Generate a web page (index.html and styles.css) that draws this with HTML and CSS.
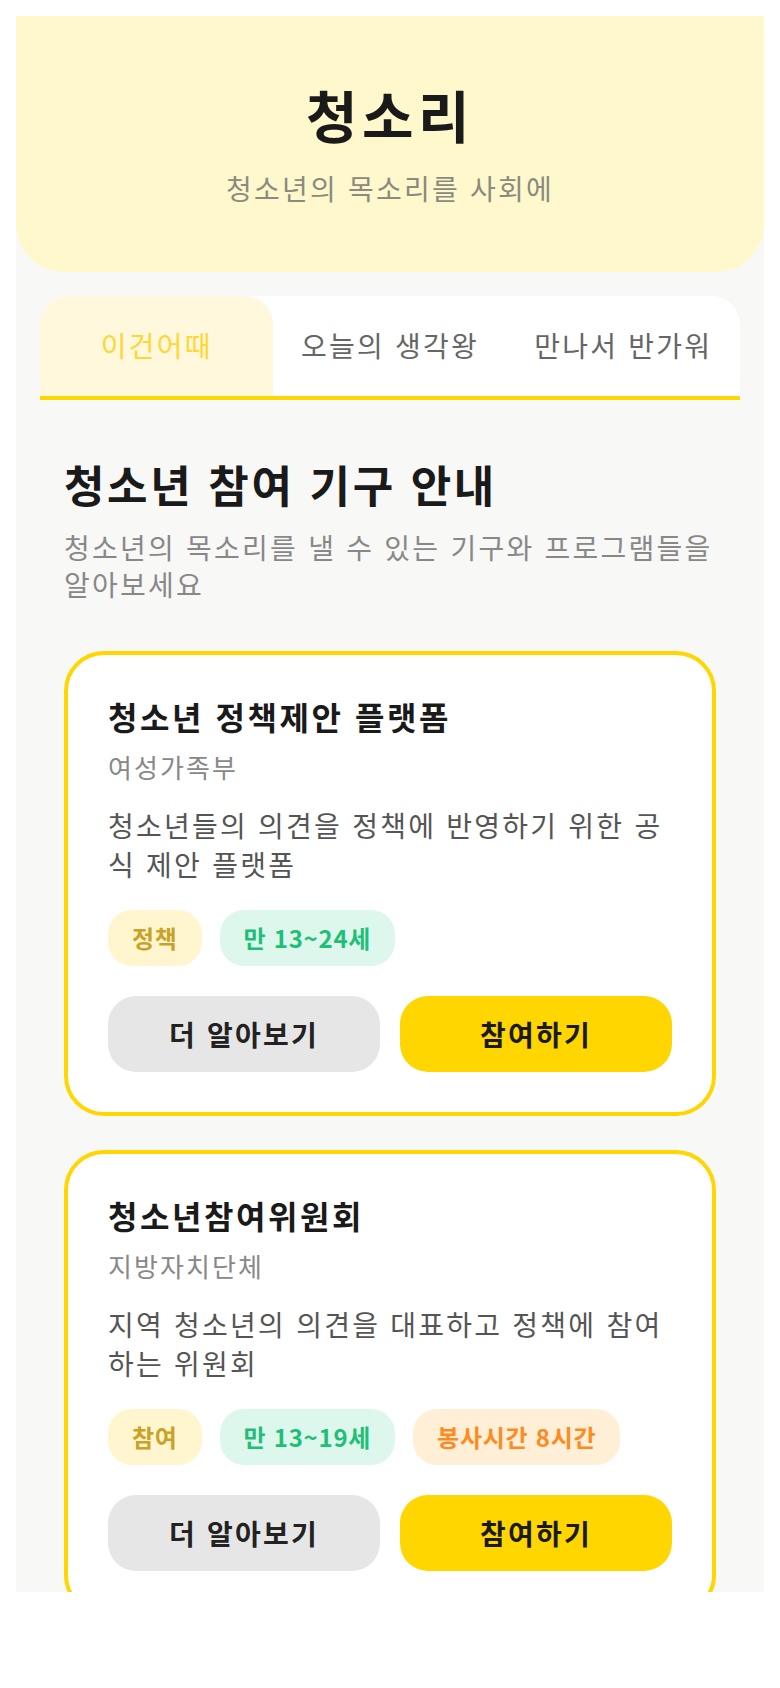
FILE: index.html
```html
<!DOCTYPE html>
<html lang="ko">
<head>
<meta charset="utf-8">
<title>청소리</title>
<link rel="stylesheet" href="styles.css">
</head>
<body>
<div class="app">
    <header class="app-header">
        <h1 class="app-title">청소리</h1>
        <p class="app-subtitle">청소년의 목소리를 사회에</p>
    </header>

    <nav class="tab-bar">
        <div class="tab tab-active">이건어때</div>
        <div class="tab">오늘의 생각왕</div>
        <div class="tab">만나서 반가워</div>
    </nav>

    <section class="content">
        <h2 class="section-title">청소년 참여 기구 안내</h2>
        <p class="section-desc">청소년의 목소리를 낼 수 있는 기구와 프로그램들을 알아보세요</p>

        <div class="org-card">
            <h3 class="org-name">청소년 정책제안 플랫폼</h3>
            <p class="org-owner">여성가족부</p>
            <p class="org-desc">청소년들의 의견을 정책에 반영하기 위한 공식 제안 플랫폼</p>
            <div class="tag-list">
                <span class="tag tag-topic">정책</span>
                <span class="tag tag-age">만 13~24세</span>
            </div>
            <div class="card-actions">
                <button class="btn btn-more">더 알아보기</button>
                <button class="btn btn-join">참여하기</button>
            </div>
        </div>

        <div class="org-card">
            <h3 class="org-name">청소년참여위원회</h3>
            <p class="org-owner">지방자치단체</p>
            <p class="org-desc">지역 청소년의 의견을 대표하고 정책에 참여하는 위원회</p>
            <div class="tag-list">
                <span class="tag tag-topic">참여</span>
                <span class="tag tag-age">만 13~19세</span>
                <span class="tag tag-hours">봉사시간 8시간</span>
            </div>
            <div class="card-actions">
                <button class="btn btn-more">더 알아보기</button>
                <button class="btn btn-join">참여하기</button>
            </div>
        </div>
    </section>
</div>
</body>
</html>
```

FILE: styles.css
```css
body {
    margin: 16px;
    background-color: #ffffff;
    font-family: "Noto Sans CJK KR", "Noto Sans", sans-serif;
    color: #1a1a1a;
}

.app-title,
.app-subtitle,
.tab,
.section-desc,
.org-name,
.org-owner,
.org-desc,
.btn {
    letter-spacing: 0.08em;
}

.app {
    height: 1576px;
    overflow: hidden;
    background-color: #f8f8f6;
}

.app-header {
    background-color: #fff8cc;
    border-radius: 0 0 48px 48px;
    padding: 64px 24px 64px;
    text-align: center;
}

.app-title {
    margin: 0;
    font-size: 56px;
    line-height: 67px;
    font-weight: 700;
    color: #1a1a1a;
}

.app-subtitle {
    margin: 22px 0 0;
    font-size: 28px;
    line-height: 39px;
    color: #8a8a80;
}

.tab-bar {
    display: flex;
    margin: 24px 24px 0;
    background-color: #ffffff;
    border-radius: 28px 28px 0 0;
    border-bottom: 4px solid #ffd600;
}

.tab {
    flex: 1;
    padding: 30px 0 31px;
    font-size: 28px;
    line-height: 39px;
    text-align: center;
    color: #666666;
    border-radius: 28px 28px 0 0;
}

.tab-active {
    background-color: #fff8dc;
    color: #ffd633;
}

.content {
    padding: 56px 48px 0;
}

.section-title {
    margin: 0;
    font-size: 44px;
    line-height: 57px;
    font-weight: 700;
    letter-spacing: 0.06em;
    color: #1a1a1a;
}

.section-desc {
    margin: 16px 0 0;
    font-size: 28px;
    line-height: 37px;
    color: #888888;
}

.org-card {
    margin-top: 48px;
    background-color: #ffffff;
    border: 4px solid #ffd600;
    border-radius: 40px;
    padding: 40px;
}

.org-card + .org-card {
    margin-top: 34px;
}

.org-name {
    margin: 0;
    font-size: 32px;
    line-height: 42px;
    font-weight: 700;
    color: #1a1a1a;
}

.org-owner {
    margin: 12px 0 0;
    font-size: 26px;
    line-height: 36px;
    color: #888888;
}

.org-desc {
    margin: 21px 0 0;
    font-size: 28px;
    line-height: 39px;
    color: #555555;
}

.tag-list {
    display: flex;
    gap: 18px;
    margin-top: 26px;
}

.tag {
    padding: 12px 24px;
    border-radius: 24px;
    font-size: 24px;
    line-height: 32px;
    font-weight: 700;
    letter-spacing: 0.03em;
}

.tag-topic {
    background-color: #fff6d0;
    color: #c9a227;
}

.tag-age {
    background-color: #def7ec;
    color: #1fbf7a;
}

.tag-hours {
    background-color: #ffefd6;
    color: #ff8a1f;
}

.card-actions {
    display: flex;
    gap: 20px;
    margin-top: 30px;
}

.btn {
    flex: 1;
    border: none;
    border-radius: 28px;
    padding: 20px 0;
    font-family: inherit;
    font-size: 28px;
    line-height: 36px;
    font-weight: 700;
}

.btn-more {
    background-color: #e6e6e6;
    color: #222222;
}

.btn-join {
    background-color: #ffd600;
    color: #1a1a1a;
}
```
